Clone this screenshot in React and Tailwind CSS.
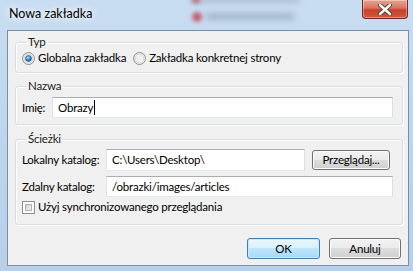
import React from "react";

const font = { fontFamily: 'Lato, "Noto Sans", Arial, sans-serif' };

function Radio({ checked }) {
  return (
    <svg width="13" height="13" viewBox="0 0 13 13" className="shrink-0">
      <defs>
        <linearGradient id="rb" x1="0" y1="0" x2="1" y2="1">
          <stop offset="0" stopColor="#e6e6e6" />
          <stop offset="1" stopColor="#fbfbfb" />
        </linearGradient>
        <radialGradient id="rd" cx="0.4" cy="0.35" r="0.7">
          <stop offset="0" stopColor="#b8e3ff" />
          <stop offset="0.5" stopColor="#3d8fd6" />
          <stop offset="1" stopColor="#1b4f8f" />
        </radialGradient>
      </defs>
      <circle cx="6.5" cy="6.5" r="6" fill="url(#rb)" stroke="#8f8f8f" strokeWidth="1" />
      <circle cx="6.5" cy="6.5" r="4.5" fill="none" stroke="#d4d4d4" strokeWidth="1" />
      {checked && <circle cx="6.5" cy="6.5" r="3" fill="url(#rd)" stroke="#24578f" strokeWidth="0.6" />}
    </svg>
  );
}

function Check() {
  return (
    <div className="w-[13px] h-[13px] border border-[#8f8f8f] bg-white p-[2px] shrink-0">
      <div className="w-full h-full bg-gradient-to-br from-[#cbcfd5] to-[#f6f6f6] border border-[#aeb3b9]" />
    </div>
  );
}

function Input({ value, cursor, className }) {
  return (
    <div
      className={
        "flex items-center bg-white border border-[#abadb3] border-t-[#abadb3] border-l-[#e2e3ea] border-r-[#dbdfe6] border-b-[#e3e9ef] pl-[5px] text-black whitespace-nowrap " +
        className
      }
    >
      <span className="leading-[16px]">{value}</span>
      {cursor && <span className="w-px h-[15px] bg-black ml-[1px]" />}
    </div>
  );
}

function Button({ children, def, className }) {
  return (
    <div
      className={
        "flex items-center justify-center rounded-[3px] border text-black whitespace-nowrap " +
        (def
          ? "border-[#3c7fb1] shadow-[inset_0_0_0_1px_#c8eafc] bg-[linear-gradient(to_bottom,#eaf6fd_0%,#d9f0fc_50%,#bee6fd_50%,#a7d9f5_100%)] "
          : "border-[#707070] shadow-[inset_0_0_0_1px_#fcfcfc] bg-[linear-gradient(to_bottom,#f2f2f2_0%,#ebebeb_50%,#dddddd_50%,#cfcfcf_100%)] ") +
        className
      }
    >
      {children}
    </div>
  );
}

function Group({ title, className, children }) {
  return (
    <fieldset
      className={
        "border border-[#d5dfe5] rounded-[3px] shadow-[inset_1px_1px_0_#fff,1px_1px_0_#fff] " + className
      }
    >
      <legend className="ml-[4px] px-[2px] leading-[16px] text-[#1a1a1a]">{title}</legend>
      {children}
    </fieldset>
  );
}

export default function App() {
  return (
    <div
      style={font}
      className="relative w-[413px] h-[271px] overflow-hidden text-[11.5px] tracking-[-0.2px] bg-[linear-gradient(to_bottom,#c9ddf2_0%,#bfd6ee_40%,#b7cfe9_100%)]"
    >
      {/* blurred background seen through glass */}
      <div className="absolute left-[192px] top-[12px] w-[10px] h-[10px] rounded-full bg-[#c0414a] blur-[2px] opacity-80" />
      <div className="absolute left-[206px] top-[13px] w-[88px] h-[7px] bg-[#8a9cb0] blur-[3px] opacity-60" />
      <div className="absolute left-[190px] top-[-4px] w-[110px] h-[7px] bg-[#9aa9bb] blur-[3px] opacity-60" />
      <div className="absolute left-[192px] top-[-3px] w-[8px] h-[6px] rounded-full bg-[#c0414a] blur-[2px] opacity-70" />

      {/* title bar */}
      <div className="relative h-[30px] flex items-start justify-between pl-[9px] pr-[5px]">
        <div className="pt-[6px] text-[12.5px] tracking-normal leading-[16px] text-black [text-shadow:0_0_6px_#fff,0_0_8px_#fff]">
          Nowa zakładka
        </div>
        <div className="w-[46px] h-[19px] rounded-b-[4px] border border-t-0 border-[#6d2a24] bg-[linear-gradient(to_bottom,#e8a493_0%,#d7735e_45%,#c7402a_55%,#d1573e_100%)] shadow-[inset_0_0_0_1px_rgba(255,255,255,0.35)] flex items-center justify-center">
          <svg width="14" height="11" viewBox="0 0 14 11">
            <path d="M2 1 L12 10 M12 1 L2 10" stroke="#3b3b3b" strokeWidth="4.2" strokeLinecap="round" />
            <path d="M2 1 L12 10 M12 1 L2 10" stroke="#ffffff" strokeWidth="2.4" strokeLinecap="round" />
          </svg>
        </div>
      </div>

      {/* client area */}
      <div className="ml-[7px] mr-[4px] h-[236px] border border-[#7b8da5] bg-[#f0f0f0] pl-[7px] pr-[5px] pt-[3px] flex flex-col">
        <Group title="Typ" className="pl-[6px] pb-[6px]">
          <div className="flex items-center h-[16px] text-black whitespace-nowrap">
            <Radio checked />
            <span className="ml-[3px]">Globalna zakładka</span>
            <span className="ml-[7px]">
              <Radio />
            </span>
            <span className="ml-[3px]">Zakładka konkretnej strony</span>
          </div>
        </Group>

        <Group title="Nazwa" className="mt-[5px] pl-[6px] pr-[9px] pb-[6px]">
          <div className="flex items-center mt-[3px] text-black whitespace-nowrap">
            <span className="w-[30px]">Imię:</span>
            <Input value="Obrazy" cursor className="flex-1 h-[21px]" />
          </div>
        </Group>

        <Group title="Ścieżki" className="mt-[6px] pl-[6px] pr-[9px] pb-[9px]">
          <div className="flex items-center mt-[2px] text-black whitespace-nowrap">
            <span className="w-[84px]">Lokalny katalog:</span>
            <Input value="C:\Users\Desktop\" className="w-[199px] h-[22px]" />
            <Button className="ml-[7px] w-[78px] h-[20px]">Przeglądaj...</Button>
          </div>
          <div className="flex items-center mt-[5px] text-black whitespace-nowrap">
            <span className="w-[84px]">Zdalny katalog:</span>
            <Input value="/obrazki/images/articles" className="flex-1 h-[21px]" />
          </div>
          <div className="flex items-center mt-[2px] h-[16px] text-black whitespace-nowrap">
            <Check />
            <span className="ml-[3px]">Użyj synchronizowanego przeglądania</span>
          </div>
        </Group>

        <div className="mt-auto mb-[6px] mr-[2px] flex justify-end gap-[9px]">
          <Button def className="w-[73px] h-[21px]">OK</Button>
          <Button className="w-[72px] h-[21px]">Anuluj</Button>
        </div>
      </div>
    </div>
  );
}
